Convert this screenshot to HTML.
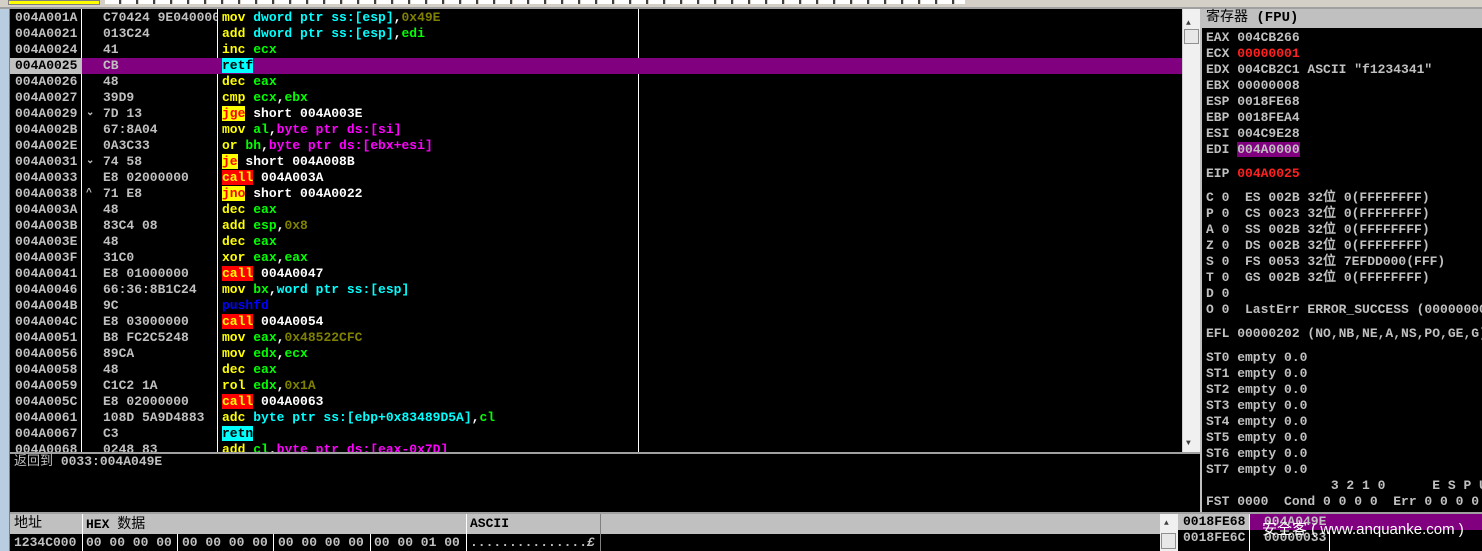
<!DOCTYPE html>
<html><head><meta charset="utf-8"><style>
*{margin:0;padding:0;box-sizing:border-box}
body{width:1482px;height:551px;overflow:hidden;background:#000;position:relative;font-family:"Liberation Mono","WenQuanYi Zen Hei",monospace;font-size:13px;font-weight:bold;color:#c0c0c0;line-height:16px}
.a{position:absolute;white-space:pre}
.y{color:#ffff00}.g{color:#00ff00}.c{color:#00ffff}.m{color:#ff00ff}.o{color:#808000}.w{color:#fff}.b{color:#0000ff}.rd{color:#ff2020}
.jc{background:#ffff00;color:#ff0000}.cl{background:#ff0000;color:#ffff00}.rt{background:#00ffff;color:#000}
</style></head><body>
<div class="a" style="left:0;top:0;width:1482px;height:9px;background:#d4d0c8;border-bottom:2px solid #a0a0a0"></div>
<div class="a" style="left:8px;top:0;width:92px;height:5px;background:#ffff00;border:1px solid #808080"></div>
<div class="a" style="left:105px;top:0;width:860px;height:4px;background:repeating-linear-gradient(90deg,#fff 0 14px,#404040 14px 16px,#d4d0c8 16px 17px)"></div>
<div class="a" style="left:0;top:9px;width:10px;height:542px;background:#b8cde0;border-right:1px solid #808080"></div>
<div class="a" style="left:81px;top:9px;width:1px;height:443px;background:#fff"></div>
<div class="a" style="left:217px;top:9px;width:1px;height:443px;background:#fff"></div>
<div class="a" style="left:638px;top:9px;width:1px;height:443px;background:#fff"></div>
<div class="a" style="left:10px;top:58px;width:72px;height:16px;background:#c0c0c0"></div>
<div class="a" style="left:82px;top:58px;width:1100px;height:16px;background:#800080"></div>
<div class="a" style="left:15px;top:10px">004A001A
004A0021
004A0024
<span style="color:#000">004A0025</span>
004A0026
004A0027
004A0029
004A002B
004A002E
004A0031
004A0033
004A0038
004A003A
004A003B
004A003E
004A003F
004A0041
004A0046
004A004B
004A004C
004A0051
004A0056
004A0058
004A0059
004A005C
004A0061
004A0067
004A0068</div>
<div class="a" style="left:86px;top:10px;font-size:10px">





⌄


⌄

^</div>
<div class="a" style="left:103px;top:10px;width:114px;overflow:hidden">C70424 9E040000
013C24
41
CB
48
39D9
7D 13
67:8A04
0A3C33
74 58
E8 02000000
71 E8
48
83C4 08
48
31C0
E8 01000000
66:36:8B1C24
9C
E8 03000000
B8 FC2C5248
89CA
48
C1C2 1A
E8 02000000
108D 5A9D4883
C3
0248 83</div>
<div class="a" style="left:222px;top:10px;height:442px;overflow:hidden"><span class="y">mov</span> <span class="c">dword ptr ss:[esp]</span><span class="w">,</span><span class="o">0x49E</span>
<span class="y">add</span> <span class="c">dword ptr ss:[esp]</span><span class="w">,</span><span class="g">edi</span>
<span class="y">inc</span> <span class="g">ecx</span>
<span class="rt">retf</span>
<span class="y">dec</span> <span class="g">eax</span>
<span class="y">cmp</span> <span class="g">ecx</span><span class="w">,</span><span class="g">ebx</span>
<span class="jc">jge</span> <span class="w">short 004A003E</span>
<span class="y">mov</span> <span class="g">al</span><span class="w">,</span><span class="m">byte ptr ds:[si]</span>
<span class="y">or</span> <span class="g">bh</span><span class="w">,</span><span class="m">byte ptr ds:[ebx+esi]</span>
<span class="jc">je</span> <span class="w">short 004A008B</span>
<span class="cl">call</span> <span class="w">004A003A</span>
<span class="jc">jno</span> <span class="w">short 004A0022</span>
<span class="y">dec</span> <span class="g">eax</span>
<span class="y">add</span> <span class="g">esp</span><span class="w">,</span><span class="o">0x8</span>
<span class="y">dec</span> <span class="g">eax</span>
<span class="y">xor</span> <span class="g">eax</span><span class="w">,</span><span class="g">eax</span>
<span class="cl">call</span> <span class="w">004A0047</span>
<span class="y">mov</span> <span class="g">bx</span><span class="w">,</span><span class="c">word ptr ss:[esp]</span>
<span class="b">pushfd</span>
<span class="cl">call</span> <span class="w">004A0054</span>
<span class="y">mov</span> <span class="g">eax</span><span class="w">,</span><span class="o">0x48522CFC</span>
<span class="y">mov</span> <span class="g">edx</span><span class="w">,</span><span class="g">ecx</span>
<span class="y">dec</span> <span class="g">eax</span>
<span class="y">rol</span> <span class="g">edx</span><span class="w">,</span><span class="o">0x1A</span>
<span class="cl">call</span> <span class="w">004A0063</span>
<span class="y">adc</span> <span class="c">byte ptr ss:[ebp+0x83489D5A]</span><span class="w">,</span><span class="g">cl</span>
<span class="rt">retn</span>
<span class="y">add</span> <span class="g">cl</span><span class="w">,</span><span class="m">byte ptr ds:[eax-0x7D]</span></div>
<div class="a" style="left:1182px;top:9px;width:18px;height:443px;background:#f0f0f0;border-left:1px solid #d0d0d0"></div>
<div class="a" style="left:1186px;top:16px;font-size:8px;color:#404040">▲</div>
<div class="a" style="left:1184px;top:29px;width:15px;height:15px;background:#e8e8e8;border:1px solid #909090"></div>
<div class="a" style="left:1186px;top:436px;font-size:8px;color:#404040">▼</div>
<div class="a" style="left:10px;top:452px;width:1190px;height:2px;background:#a0a0a0"></div>
<div class="a" style="left:14px;top:454px;font-weight:normal">返回到 <b>0033:004A049E</b></div>
<div class="a" style="left:1200px;top:9px;width:2px;height:505px;background:#c0c0c0"></div>
<div class="a" style="left:1202px;top:9px;width:280px;height:19px;background:#c0c0c0;color:#000;font-weight:normal;font-size:14px;line-height:19px;padding-left:4px">寄存器 <b>(FPU)</b></div>
<div class="a" style="left:1206px;top:30px">EAX 004CB266
ECX <span class="rd">00000001</span>
EDX 004CB2C1 ASCII "f1234341"
EBX 00000008
ESP 0018FE68
EBP 0018FEA4
ESI 004C9E28
EDI <span style="background:#800080">004A0000</span></div>
<div class="a" style="left:1206px;top:166px">EIP <span class="rd">004A0025</span></div>
<div class="a" style="left:1206px;top:190px">C 0  ES 002B 32位 0(FFFFFFFF)
P 0  CS 0023 32位 0(FFFFFFFF)
A 0  SS 002B 32位 0(FFFFFFFF)
Z 0  DS 002B 32位 0(FFFFFFFF)
S 0  FS 0053 32位 7EFDD000(FFF)
T 0  GS 002B 32位 0(FFFFFFFF)
D 0
O 0  LastErr ERROR_SUCCESS (00000000)</div>
<div class="a" style="left:1206px;top:326px">EFL 00000202 (NO,NB,NE,A,NS,PO,GE,G)</div>
<div class="a" style="left:1206px;top:350px">ST0 empty 0.0
ST1 empty 0.0
ST2 empty 0.0
ST3 empty 0.0
ST4 empty 0.0
ST5 empty 0.0
ST6 empty 0.0
ST7 empty 0.0
                3 2 1 0      E S P U
FST 0000  Cond 0 0 0 0  Err 0 0 0 0</div>
<div class="a" style="left:10px;top:512px;width:1472px;height:2px;background:#a0a0a0"></div>
<div class="a" style="left:10px;top:514px;width:1150px;height:20px;background:#c0c0c0"></div>
<div class="a" style="left:14px;top:515px;color:#000;font-weight:normal;font-size:14px;line-height:19px">地址</div>
<div class="a" style="left:82px;top:514px;width:1px;height:20px;background:#fff"></div>
<div class="a" style="left:86px;top:515px;color:#000;line-height:19px">HEX <span style="font-weight:normal;font-size:14px">数据</span></div>
<div class="a" style="left:466px;top:514px;width:1px;height:37px;background:#fff"></div>
<div class="a" style="left:470px;top:516px;color:#000">ASCII</div>
<div class="a" style="left:600px;top:514px;width:1px;height:37px;background:#808080"></div>
<div class="a" style="left:14px;top:535px">1234C000</div>
<div class="a" style="left:82px;top:534px;width:1px;height:17px;background:#fff"></div>
<div class="a" style="left:86px;top:535px">00 00 00 00</div>
<div class="a" style="left:177px;top:534px;width:1px;height:17px;background:#fff"></div>
<div class="a" style="left:182px;top:535px">00 00 00 00</div>
<div class="a" style="left:273px;top:534px;width:1px;height:17px;background:#fff"></div>
<div class="a" style="left:278px;top:535px">00 00 00 00</div>
<div class="a" style="left:370px;top:534px;width:1px;height:17px;background:#fff"></div>
<div class="a" style="left:374px;top:535px">00 00 01 00</div>
<div class="a" style="left:470px;top:535px">...............<i>£</i></div>
<div class="a" style="left:1160px;top:514px;width:18px;height:37px;background:#f0f0f0"></div>
<div class="a" style="left:1164px;top:516px;font-size:8px;color:#404040">▲</div>
<div class="a" style="left:1161px;top:533px;width:15px;height:16px;background:#e8e8e8;border:1px solid #909090"></div>
<div class="a" style="left:1178px;top:514px;width:72px;height:16px;background:#c0c0c0"></div>
<div class="a" style="left:1250px;top:514px;width:232px;height:16px;background:#800080"></div>
<div class="a" style="left:1249px;top:514px;width:1px;height:37px;background:#fff"></div>
<div class="a" style="left:1329px;top:530px;width:1px;height:21px;background:#fff"></div>
<div class="a" style="left:1183px;top:514px"><span style="color:#000">0018FE68</span>
0018FE6C</div>
<div class="a" style="left:1264px;top:514px">004A049E
00000033</div>
<div class="a" style="left:1262px;top:520px;color:#fff;font-family:'Liberation Sans','Noto Sans CJK SC',sans-serif;font-weight:normal;font-size:15px;line-height:20px">安全客 ( www.anquanke.com )</div>
</body></html>
